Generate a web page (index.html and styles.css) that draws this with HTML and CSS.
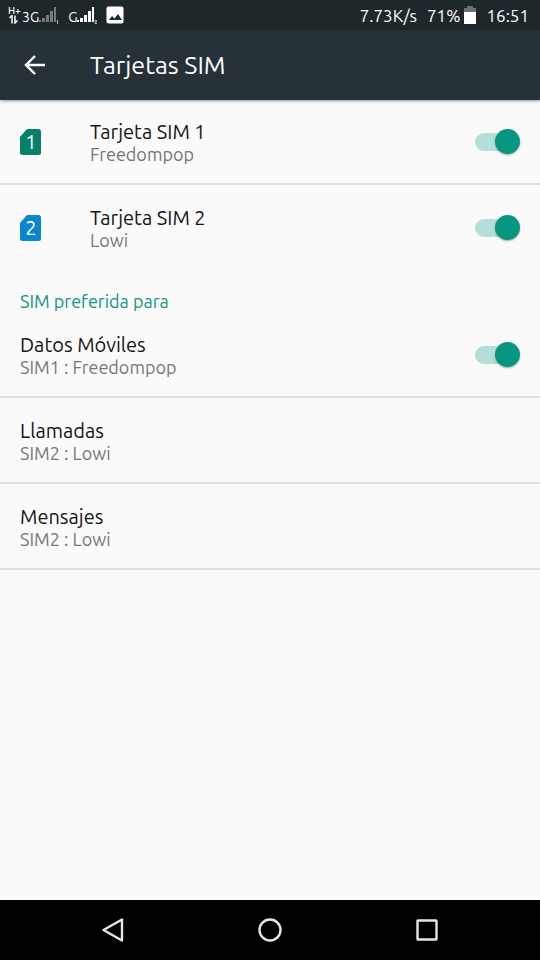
FILE: index.html
```html
<!DOCTYPE html>
<html lang="es">
<head>
<meta charset="utf-8">
<meta name="viewport" content="width=device-width, initial-scale=1">
<title>Tarjetas SIM</title>
<link rel="stylesheet" href="styles.css">
</head>
<body>
<div class="status">
  <div class="status-left">
    <span class="net">
      <span class="net-type">H+</span>
      <svg width="11" height="9" viewBox="0 0 11 9" aria-hidden="true"><path d="M1.500 3L4 .5V8.500M7 .5V8l2.500-2.500" fill="none" stroke="#fff" stroke-width="1.500"/></svg>
    </span>
    <span class="gen">3G</span>
    <svg class="bars" width="20" height="18" viewBox="0 0 20 18" aria-hidden="true"><path d="M0 14h2v2H0zM3 12h3v4H3zM7 9h3v7H7zM11 5h3v11h-3zM15 1h2v15h-2z" fill="#757c7e"/><path d="M18.500 14v4" stroke="#b5babb"/></svg>
    <span class="gen gen-second">G</span>
    <svg class="bars" width="20" height="18" viewBox="0 0 20 18" aria-hidden="true"><path d="M0 14h2v2H0zM3 12h3v4H3zM7 9h3v7H7zM11 5h3v11h-3zM15 1h2v15h-2z" fill="#fff"/><path d="M17.500 14.500h2v1.500h-1.500v1.500h2" fill="none" stroke="#b5babb"/></svg>
    <svg class="photo" width="18" height="18" viewBox="0 0 18 18" aria-hidden="true"><rect x=".5" y=".5" width="17" height="17" rx="2" fill="#fff"/><path d="M3 14l3-4 2.500 2.500L12 8l4 6z" fill="#20292c"/></svg>
  </div>
  <div class="status-right">
    <span>7.73K/s</span>
    <span class="battery">71%<svg width="12" height="18" viewBox="0 0 12 18" aria-hidden="true"><path d="M0 2h3V0h6v2h3v5H0z" fill="#6b7275"/><path d="M0 6h12v12H0z" fill="#fff"/></svg></span>
    <span>16:51</span>
  </div>
</div>
<header class="appbar">
  <button class="back" aria-label="Atrás"><svg width="22" height="22" viewBox="0 0 22 22"><path d="M11 2L2 11l9 9M2 11h19" fill="none" stroke="#fff" stroke-width="2.400"/></svg></button>
  <h1>Tarjetas SIM</h1>
</header>
<main>
  <label class="row">
    <span class="icon"><svg width="21" height="26" viewBox="0 0 21 26" aria-hidden="true"><path d="M7 0h11.500Q21 0 21 2.500v21Q21 26 18.500 26h-16Q0 26 0 23.500V8z" fill="#07806a"/><text x="11" y="20" class="num">1</text></svg></span>
    <span class="text"><span class="title">Tarjeta SIM 1</span><span class="sub">Freedompop</span></span>
    <input type="checkbox" class="switch" role="switch" checked>
  </label>
  <label class="row plain">
    <span class="icon"><svg width="21" height="26" viewBox="0 0 21 26" aria-hidden="true"><path d="M7 0h11.500Q21 0 21 2.500v21Q21 26 18.500 26h-16Q0 26 0 23.500V8z" fill="#0a86cc"/><text x="11" y="20" class="num">2</text></svg></span>
    <span class="text"><span class="title">Tarjeta SIM 2</span><span class="sub">Lowi</span></span>
    <input type="checkbox" class="switch" role="switch" checked>
  </label>
  <h2>SIM preferida para</h2>
  <label class="row">
    <span class="text"><span class="title">Datos Móviles</span><span class="sub">SIM1 : Freedompop</span></span>
    <input type="checkbox" class="switch" role="switch" checked>
  </label>
  <button class="row"><span class="text"><span class="title">Llamadas</span><span class="sub">SIM2 : Lowi</span></span></button>
  <button class="row"><span class="text"><span class="title">Mensajes</span><span class="sub">SIM2 : Lowi</span></span></button>
</main>
<nav class="navbar">
  <button aria-label="Volver"><svg width="24" height="26" viewBox="0 0 24 26"><path d="M21 2.500v21L2.500 13z"/></svg></button>
  <button aria-label="Inicio"><svg width="24" height="26" viewBox="0 0 24 26"><circle cx="12" cy="13" r="10.500"/></svg></button>
  <button aria-label="Recientes"><svg width="24" height="26" viewBox="0 0 24 26"><rect x="2.500" y="3.500" width="19" height="19" rx=".5"/></svg></button>
</nav>
</body>
</html>
```
FILE: styles.css
```css
* { box-sizing: border-box; }
body {
  margin: 0;
  min-height: 100vh;
  display: flex;
  flex-direction: column;
  background: #fafafa;
  color: #151515;
  font-family: "Ubuntu", "Noto Sans", sans-serif;
}
button {
  border: 0;
  padding: 0;
  background: none;
  color: inherit;
  font: inherit;
  text-align: left;
}
svg { display: block; }
h1, h2 { margin: 0; font-weight: 400; }

.status {
  height: 30px;
  padding: 0 11px 0 8px;
  display: flex;
  justify-content: space-between;
  align-items: center;
  background: #1e282b;
  color: #fff;
  font-size: 17px;
}
.status-left, .status-right, .battery { display: flex; align-items: center; }
.status-right { gap: 10px; }
.battery { gap: 4px; }
.net { width: 14px; }
.net-type { display: block; font-size: 10px; line-height: 9px; font-weight: 500; }
.gen { font-size: 14px; line-height: 18px; padding-top: 4px; }
.gen-second { margin-left: 9px; }
.photo { margin-left: 9px; }

.appbar {
  position: relative;
  height: 70px;
  padding: 0 20px;
  display: flex;
  align-items: center;
  background: #263238;
  color: #fff;
  box-shadow: 0 1px 3px rgba(0, 0, 0, .4);
}
.back { width: 70px; padding-left: 4px; }
h1 { font-size: 25px; line-height: 32px; }

main { flex: 1; margin-top: -1px; }
.row {
  width: 100%;
  min-height: 86px;
  padding: 1px 20px 0;
  display: flex;
  align-items: center;
  border-bottom: 2px solid #dfdfdf;
}
.plain { border-bottom-color: transparent; }
.icon { width: 70px; }
.num { font-size: 20px; text-anchor: middle; fill: #fff; }
.text { flex: 1; padding-top: 2px; }
.title, .sub { display: block; line-height: 22px; }
.title { font-size: 20px; }
.sub { font-size: 18px; color: #777; }
h2 {
  height: 41px;
  padding: 19px 20px 0;
  font-size: 18px;
  line-height: 22px;
  color: #109681;
}
.switch {
  appearance: none;
  width: 36px;
  height: 18px;
  margin: 0 9px 0 0;
  display: flex;
  align-items: center;
  justify-content: flex-end;
  background: #b3dfd8;
  border-radius: 9px;
}
.switch::before {
  content: "";
  flex: none;
  width: 25px;
  height: 25px;
  margin-right: -9px;
  border-radius: 50%;
  background: #079781;
  box-shadow: 0 1px 2px rgba(0, 0, 0, .35);
}

.navbar {
  height: 60px;
  padding: 0 34px;
  display: grid;
  grid-template-columns: repeat(3, 1fr);
  background: #000;
}
.navbar button { display: grid; place-items: center; }
.navbar svg { fill: none; stroke: #e6e6e6; stroke-width: 2.400; stroke-linejoin: round; }
```
